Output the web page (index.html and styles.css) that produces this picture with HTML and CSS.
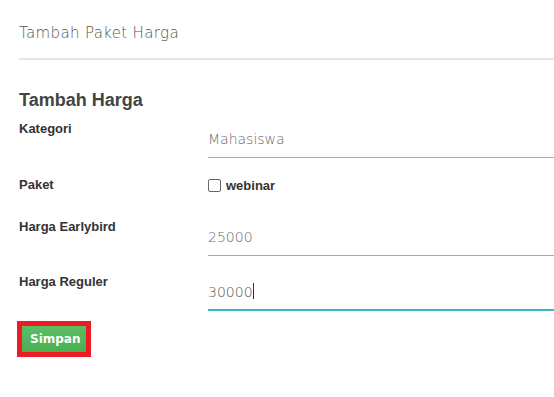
FILE: index.html
```html
<!DOCTYPE html>
<html lang="id">
<head>
    <meta charset="UTF-8">
    <meta name="viewport" content="width=device-width, initial-scale=1.0">
    <title>Tambah Paket Harga</title>
    <link rel="stylesheet" href="styles.css">
</head>
<body>
    <section class="panel">
        <div class="panel-title">Tambah Paket Harga</div>
        <div class="panel-body">
            <h2>Tambah Harga</h2>
            <form class="form-harga">
                <div class="form-row row-kategori">
                    <label class="form-label">Kategori</label>
                    <div class="form-field">
                        <input type="text" class="line-input" value="Mahasiswa">
                    </div>
                </div>
                <div class="form-row row-paket">
                    <label class="form-label">Paket</label>
                    <div class="form-field">
                        <label class="check"><span class="box"></span> webinar</label>
                    </div>
                </div>
                <div class="form-row row-early">
                    <label class="form-label">Harga Earlybird</label>
                    <div class="form-field">
                        <input type="text" class="line-input" value="25000">
                    </div>
                </div>
                <div class="form-row row-reguler">
                    <label class="form-label">Harga Reguler</label>
                    <div class="form-field">
                        <div class="line-input active">30000<span class="caret"></span></div>
                    </div>
                </div>
                <div class="actions">
                    <span class="highlight"><button type="button" class="btn-simpan">Simpan</button></span>
                </div>
            </form>
        </div>
    </section>
</body>
</html>
```

FILE: styles.css
```css
body {
    margin: 0;
    padding: 0;
    background-color: white;
    color: #333;
    overflow: hidden;
    font-family: 'Liberation Sans', Arial, sans-serif;
}
.panel {
    padding-left: 19px;
    width: 600px;
}
.panel-title {
    font-family: 'DejaVu Sans', sans-serif;
    font-weight: 200;
    font-size: 15px;
    letter-spacing: 0.35px;
    color: #555;
    padding: 24px 0 16px;
    border-bottom: 2px solid #e5e5e5;
}
.panel-body h2 {
    font-size: 18px;
    font-weight: 700;
    color: #444;
    margin: 30px 0 10px;
}
.form-row {
    display: flex;
    align-items: flex-start;
}
.form-label {
    width: 189px;
    flex: none;
    font-size: 13px;
    font-weight: 700;
    color: #333;
}
.form-field {
    flex: 1;
}
.line-input {
    display: block;
    box-sizing: border-box;
    width: 100%;
    border: none;
    border-bottom: 1px solid #aaa;
    padding: 10px 0 9px;
    margin: 0;
    font-family: 'DejaVu Sans', sans-serif;
    font-weight: 200;
    font-size: 14px;
    color: #6a6a6a;
    outline: none;
    line-height: 17px;
    background: transparent;
}
.line-input.active {
    height: 37px;
    padding-top: 9px;
    border-bottom: 2px solid #3cb5c4;
    color: #555;
}
.caret {
    display: inline-block;
    width: 1px;
    height: 16px;
    background: #333;
    vertical-align: -2px;
}
.row-paket {
    margin-top: 18px;
}
.row-paket .form-label {
    padding-top: 1px;
}
.row-early {
    margin-top: 26px;
}
.row-reguler {
    margin-top: 18px;
}
.check {
    display: flex;
    align-items: center;
    font-size: 13px;
    font-weight: 700;
    color: #333;
    gap: 5px;
    padding-top: 2px;
}
.box {
    width: 11px;
    height: 11px;
    border: 1px solid #666;
    border-radius: 2px;
}
.actions {
    margin-top: 10px;
}
.highlight {
    display: inline-block;
    margin-left: -2px;
    border: 5px solid #ed1c24;
}
.btn-simpan {
    display: block;
    background: linear-gradient(#5cbe62, #4cae52);
    color: white;
    border: none;
    font-family: 'DejaVu Sans', sans-serif;
    font-weight: 700;
    font-size: 12px;
    padding: 6px 8px 6px;
    height: 26px;
    width: 64px;
}
```
